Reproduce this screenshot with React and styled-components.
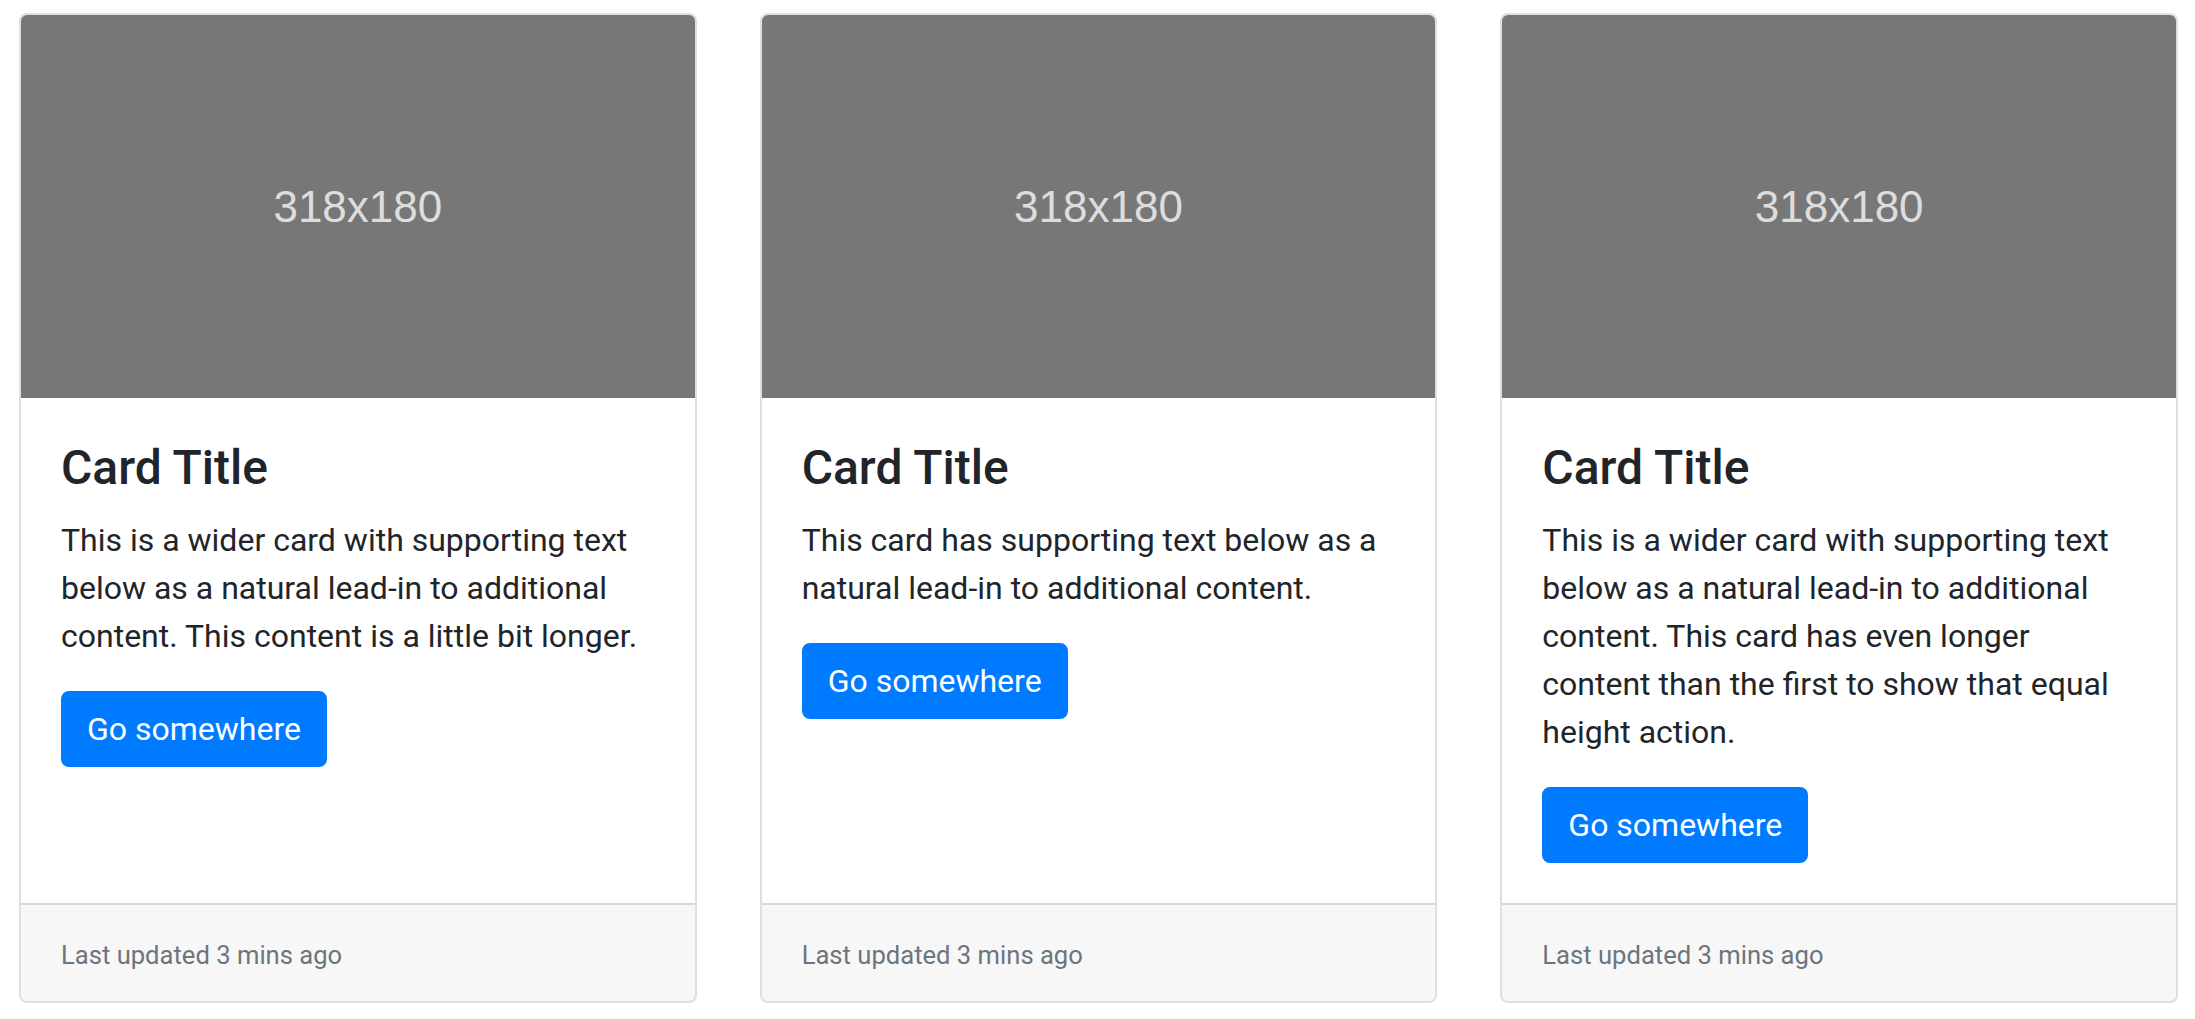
import styled, { createGlobalStyle } from "styled-components";

const GlobalStyle = createGlobalStyle`
  html, body {
    margin: 0;
    background: #fff;
  }
  body {
    font-family: "Segoe UI", Roboto, "Helvetica Neue", Arial, "Noto Sans", sans-serif;
    font-size: 32px;
    line-height: 1.5;
    color: #212529;
  }
  * {
    box-sizing: border-box;
  }
`;

const Deck = styled.div`
  display: grid;
  grid-template-columns: repeat(3, 1fr);
  column-gap: 63px;
  padding: 13px 17px 0 19px;
`;

const Card = styled.div`
  display: flex;
  flex-direction: column;
  min-width: 0;
  background: #fff;
  border: 2px solid rgba(0, 0, 0, 0.125);
  border-radius: 8px;
`;

const Placeholder = styled.div`
  display: flex;
  align-items: center;
  justify-content: center;
  height: 383px;
  background: #777;
  border-radius: 6px 6px 0 0;
  color: rgba(255, 255, 255, 0.75);
  font-family: "Liberation Sans", Arial, Helvetica, sans-serif;
  font-size: 44px;
  line-height: 1;
`;

const Body = styled.div`
  flex: 1 1 auto;
  padding: 41px 40px 40px;
`;

const Title = styled.h4`
  margin: 0 0 19px;
  font-size: 48px;
  font-weight: 500;
  line-height: 1.2;
`;

const Text = styled.p`
  margin: 0 0 31px;
`;

const Button = styled.a`
  display: inline-block;
  padding: 12px 24px;
  border: 2px solid #007bff;
  border-radius: 8px;
  background: #007bff;
  color: #fff;
  font-size: 32px;
  line-height: 1.5;
  text-decoration: none;
  cursor: pointer;
`;

const Footer = styled.div`
  padding: 24px 40px;
  background: rgba(0, 0, 0, 0.03);
  border-top: 2px solid rgba(0, 0, 0, 0.125);
  border-radius: 0 0 6px 6px;
`;

const Muted = styled.small`
  font-size: 80%;
  color: #6c757d;
`;

const cards = [
  "This is a wider card with supporting text below as a natural lead-in to additional content. This content is a little bit longer.",
  "This card has supporting text below as a natural lead-in to additional content.",
  "This is a wider card with supporting text below as a natural lead-in to additional content. This card has even longer content than the first to show that equal height action.",
];

export default function App() {
  return (
    <>
      <GlobalStyle />
      <Deck>
        {cards.map((text, i) => (
          <Card key={i}>
            <Placeholder>318x180</Placeholder>
            <Body>
              <Title>Card Title</Title>
              <Text>{text}</Text>
              <Button href="#">Go somewhere</Button>
            </Body>
            <Footer>
              <Muted>Last updated 3 mins ago</Muted>
            </Footer>
          </Card>
        ))}
      </Deck>
    </>
  );
}
